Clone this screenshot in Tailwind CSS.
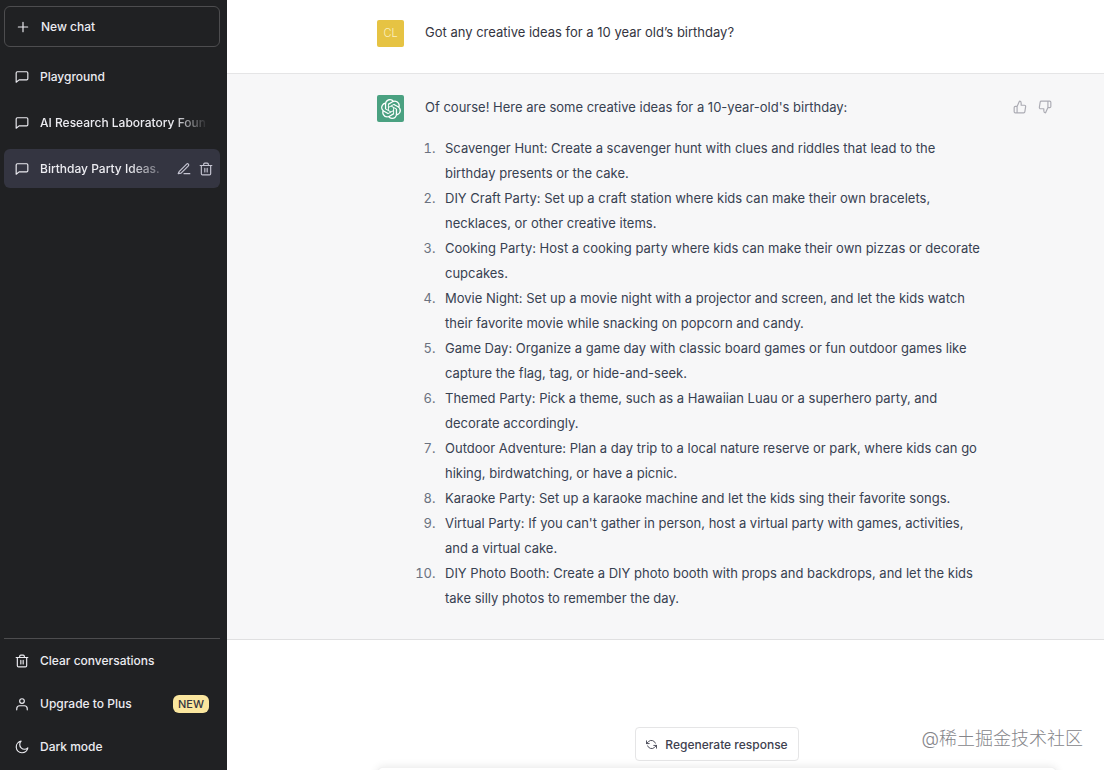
<!DOCTYPE html>
<html lang="en">
	<head>
		<meta charset="utf-8" />
		<title>Birthday Party Ideas</title>
		<script src="https://cdn.jsdelivr.net/npm/@tailwindcss/browser@4"></script>
	</head>
	<body class="bg-white font-['Inter','Noto_Sans_CJK_SC',sans-serif] text-[#343541]">
		<!-- Shared icons -->
		<svg class="hidden">
			<symbol id="chat" viewBox="0 0 24 24">
				<path d="M22 15a2 2 0 0 1-2 2H7l-5 4V5a2 2 0 0 1 2-2h16a2 2 0 0 1 2 2z" />
			</symbol>
			<symbol id="trash" viewBox="0 0 24 24">
				<path d="M2 6h20M20 6v14a2 2 0 0 1-2 2H6a2 2 0 0 1-2-2V6m4 0V4a2 2 0 0 1 2-2h4a2 2 0 0 1 2 2v2M10 11v6M14 11v6" />
			</symbol>
			<symbol id="thumb" viewBox="0 0 24 24">
				<path d="M14 9V5a3 3 0 0 0-3-3l-4 9v11h11.28a2 2 0 0 0 2-1.7l1.38-9a2 2 0 0 0-2-2.3zM7 22H4a2 2 0 0 1-2-2v-7a2 2 0 0 1 2-2h3" />
			</symbol>
		</svg>

		<div class="flex h-screen overflow-hidden">
			<!-- Sidebar -->
			<aside class="flex w-[227px] shrink-0 flex-col bg-[#202123] pt-[6px] pr-[7px] pb-[2px] pl-1 text-[12px] font-medium text-[#ececf1]">
				<button class="flex h-[41px] shrink-0 items-center gap-[11px] rounded-md border border-[#4d4d4f] px-[11px]">
					<svg class="size-[14px]" viewBox="0 0 24 24" fill="none" stroke="currentColor" stroke-width="2" stroke-linecap="round">
						<path d="M12 4v16M4 12h16" />
					</svg>
					New chat
				</button>

				<nav class="mt-[10px] flex flex-1 flex-col gap-[7px]">
					<a href="#" class="flex h-[39px] items-center gap-[11px] rounded-md px-[11px]">
						<svg class="size-[14px] shrink-0" fill="none" stroke="currentColor" stroke-width="2" stroke-linecap="round" stroke-linejoin="round"><use href="#chat" /></svg>
						Playground
					</a>
					<a href="#" class="flex h-[39px] items-center gap-[11px] rounded-md pr-3 pl-[11px]">
						<svg class="size-[14px] shrink-0" fill="none" stroke="currentColor" stroke-width="2" stroke-linecap="round" stroke-linejoin="round"><use href="#chat" /></svg>
						<span class="flex-1 whitespace-nowrap mask-r-from-80%">AI Research Laboratory Foun</span>
					</a>
					<div class="flex h-[39px] items-center rounded-md bg-[#343541] pr-[7px] pl-[11px]">
						<a href="#" class="flex min-w-0 flex-1 items-center gap-[11px]">
							<svg class="size-[14px] shrink-0" fill="none" stroke="currentColor" stroke-width="2" stroke-linecap="round" stroke-linejoin="round"><use href="#chat" /></svg>
							<span class="whitespace-nowrap mask-r-from-75% mask-r-to-110%">Birthday Party Ideas.</span>
						</a>
						<button class="ml-4 text-[#c5c5d2]" aria-label="Rename">
							<svg class="size-[14px]" viewBox="0 0 24 24" fill="none" stroke="currentColor" stroke-width="2" stroke-linecap="round" stroke-linejoin="round">
								<path d="M12 20h10M16.500 3.500a2.100 2.100 0 0 1 3 3L7 19l-5 1 2-4z" />
							</svg>
						</button>
						<button class="ml-2 text-[#c5c5d2]" aria-label="Delete">
							<svg class="size-[14px]" fill="none" stroke="currentColor" stroke-width="2" stroke-linecap="round" stroke-linejoin="round"><use href="#trash" /></svg>
						</button>
					</div>
				</nav>

				<div class="border-t border-[#4d4d4f]">
					<a href="#" class="flex h-[43px] items-center gap-[11px] px-[11px]">
						<svg class="size-[14px]" fill="none" stroke="currentColor" stroke-width="2" stroke-linecap="round" stroke-linejoin="round"><use href="#trash" /></svg>
						Clear conversations
					</a>
					<a href="#" class="flex h-[43px] items-center gap-[11px] px-[11px]">
						<svg class="size-[14px]" viewBox="0 0 24 24" fill="none" stroke="currentColor" stroke-width="2" stroke-linecap="round" stroke-linejoin="round">
							<path d="M21 22v-2a5 5 0 0 0-5-5H8a5 5 0 0 0-5 5v2" />
							<circle cx="12" cy="7" r="4" />
						</svg>
						Upgrade to Plus
						<span class="ml-auto rounded-md bg-[#fae69e] px-[5px] text-[11px] leading-[18px] text-[#343541]">NEW</span>
					</a>
					<button class="flex h-[43px] w-full items-center gap-[11px] px-[11px]">
						<svg class="size-[14px]" viewBox="0 0 24 24" fill="none" stroke="currentColor" stroke-width="2" stroke-linecap="round" stroke-linejoin="round">
							<path d="M22 13.500A10 10 0 1 1 10.500 2 8 8 0 0 0 22 13.500z" />
						</svg>
						Dark mode
					</button>
				</div>
			</aside>

			<!-- Conversation -->
			<main class="relative min-w-0 flex-1 overflow-hidden text-[13px] leading-[25px]">
				<section class="border-b border-[#e5e5e6] pt-5 pb-[26px] pl-[150px]">
					<div class="flex max-w-[678px] gap-[21px]">
						<div class="flex size-[27px] shrink-0 items-center justify-center rounded-xs bg-[#e6c343] text-[11px] font-light text-[#fbf0c0]">CL</div>
						<p>Got any creative ideas for a 10 year old’s birthday?</p>
					</div>
				</section>

				<section class="border-b border-[#e0e0e1] bg-[#f7f7f8] pt-[21px] pr-[52px] pb-7 pl-[150px] text-[#374151]">
					<div class="flex max-w-[678px] gap-[21px]">
						<div class="flex size-[27px] shrink-0 items-center justify-center rounded-xs bg-[#4aa181] text-white">
							<svg class="size-5" viewBox="0 0 24 24" fill="currentColor">
								<path d="M22.282 9.821a5.985 5.985 0 0 0-.516-4.91 6.046 6.046 0 0 0-6.51-2.9A6.065 6.065 0 0 0 4.981 4.18a5.985 5.985 0 0 0-3.998 2.9 6.046 6.046 0 0 0 .743 7.097 5.98 5.98 0 0 0 .51 4.911 6.051 6.051 0 0 0 6.515 2.9A5.985 5.985 0 0 0 13.26 24a6.056 6.056 0 0 0 5.772-4.206 5.99 5.99 0 0 0 3.997-2.9 6.056 6.056 0 0 0-.747-7.073zM13.26 22.43a4.476 4.476 0 0 1-2.876-1.04l.141-.081 4.779-2.758a.795.795 0 0 0 .392-.681v-6.737l2.02 1.168a.071.071 0 0 1 .038.052v5.583a4.504 4.504 0 0 1-4.494 4.494zM3.6 18.304a4.47 4.47 0 0 1-.535-3.014l.142.085 4.783 2.759a.771.771 0 0 0 .78 0l5.843-3.369v2.332a.08.08 0 0 1-.033.062L9.74 19.95a4.5 4.5 0 0 1-6.14-1.646zM2.34 7.896a4.485 4.485 0 0 1 2.366-1.973V11.6a.766.766 0 0 0 .388.676l5.815 3.355-2.02 1.168a.076.076 0 0 1-.071 0l-4.83-2.786A4.504 4.504 0 0 1 2.34 7.872zm16.597 3.855-5.833-3.387L15.119 7.2a.076.076 0 0 1 .071 0l4.83 2.791a4.494 4.494 0 0 1-.676 8.105v-5.678a.79.79 0 0 0-.407-.667zm2.01-3.023-.141-.085-4.774-2.782a.776.776 0 0 0-.785 0L9.409 9.23V6.897a.066.066 0 0 1 .028-.061l4.83-2.787a4.5 4.5 0 0 1 6.68 4.66zM8.307 12.863l-2.02-1.164a.08.08 0 0 1-.038-.057V6.075a4.5 4.5 0 0 1 7.375-3.453l-.142.08-4.778 2.758a.795.795 0 0 0-.393.681zm1.097-2.365 2.602-1.5 2.607 1.5v2.999l-2.597 1.5-2.607-1.5z" />
							</svg>
						</div>
						<div class="min-w-0 flex-1">
							<p>Of course! Here are some creative ideas for a 10-year-old's birthday:</p>
							<ol class="mt-4 list-decimal pr-5 pl-[14px] marker:text-[#6b7280]">
								<li class="pl-[6px]">Scavenger Hunt: Create a scavenger hunt with clues and riddles that lead to the birthday presents or the cake.</li>
								<li class="pl-[6px]">DIY Craft Party: Set up a craft station where kids can make their own bracelets, necklaces, or other creative items.</li>
								<li class="pl-[6px]">Cooking Party: Host a cooking party where kids can make their own pizzas or decorate cupcakes.</li>
								<li class="pl-[6px]">Movie Night: Set up a movie night with a projector and screen, and let the kids watch their favorite movie while snacking on popcorn and candy.</li>
								<li class="pl-[6px]">Game Day: Organize a game day with classic board games or fun outdoor games like capture the flag, tag, or hide-and-seek.</li>
								<li class="pl-[6px]">Themed Party: Pick a theme, such as a Hawaiian Luau or a superhero party, and decorate accordingly.</li>
								<li class="pl-[6px]">Outdoor Adventure: Plan a day trip to a local nature reserve or park, where kids can go hiking, birdwatching, or have a picnic.</li>
								<li class="pl-[6px]">Karaoke Party: Set up a karaoke machine and let the kids sing their favorite songs.</li>
								<li class="pl-[6px]">Virtual Party: If you can't gather in person, host a virtual party with games, activities, and a virtual cake.</li>
								<li class="pl-[6px]">DIY Photo Booth: Create a DIY photo booth with props and backdrops, and let the kids take silly photos to remember the day.</li>
							</ol>
						</div>
						<div class="-ml-[14px] flex h-[23px] shrink-0 items-center gap-[11px] text-[#acacb4]">
							<button aria-label="Good response">
								<svg class="size-[14px]" fill="none" stroke="currentColor" stroke-width="2" stroke-linecap="round" stroke-linejoin="round"><use href="#thumb" /></svg>
							</button>
							<button aria-label="Bad response">
								<svg class="size-[14px] rotate-180" fill="none" stroke="currentColor" stroke-width="2" stroke-linecap="round" stroke-linejoin="round"><use href="#thumb" /></svg>
							</button>
						</div>
					</div>
				</section>

				<!-- Composer -->
				<form class="pt-[87px] pl-[150px]">
					<div class="flex max-w-[680px] flex-col items-center gap-[6px]">
						<button type="button" class="flex h-[34px] items-center gap-2 rounded-sm border border-[#e5e5e6] bg-white px-[10px] text-[12px] font-medium text-[#40414f]">
							<svg class="size-[11px]" viewBox="0 0 24 24" fill="none" stroke="currentColor" stroke-width="2" stroke-linecap="round" stroke-linejoin="round">
								<path d="M1 4v6h6M23 20v-6h-6M20.500 9A9 9 0 0 0 5.600 5.600L1 10M23 14l-4.600 4.400A9 9 0 0 1 3.500 15" />
							</svg>
							Regenerate response
						</button>
						<textarea aria-label="Message" class="h-[46px] w-full resize-none rounded-md border border-black/5 bg-white shadow-[0_0_8px_rgba(0,0,0,0.10)]"></textarea>
					</div>
				</form>

				<span class="absolute right-[21px] bottom-[19px] text-[18px] font-light text-[#85858a]">@稀土掘金技术社区</span>
			</main>
		</div>
	</body>
</html>
